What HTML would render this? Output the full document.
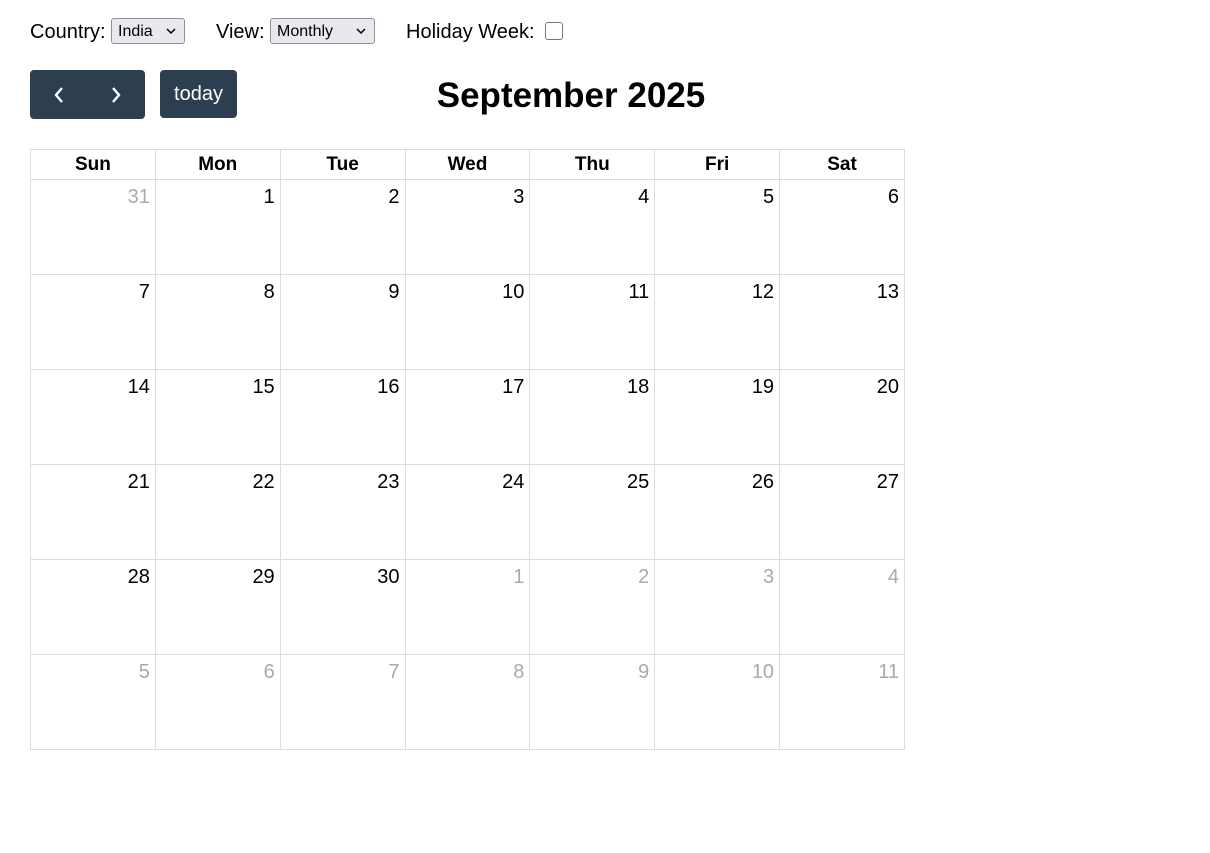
<!DOCTYPE html>
<html><head><style>
body{margin:0;background:#fff;font-family:"Liberation Sans",Arial,sans-serif;color:#000;width:1210px;height:853px;position:relative;overflow:hidden}
.a{position:absolute}
.sel{position:absolute;top:18px;height:26px;border:1px solid #8f8f9d;border-radius:3px;background:#e9e9ed;font-size:16px;box-sizing:border-box;padding:4px 0 0 6px}
.sel svg{position:absolute;right:8px;top:9px}
.btn{position:absolute;background:#2c3e50;border-radius:4px;color:#fff}
table{position:absolute;left:30px;top:149px;border-collapse:collapse;table-layout:fixed;width:875px}
td,th{border:1px solid #ddd;padding:0}
th{height:28px;font-size:19px;font-weight:bold;padding-top:1px}
td{height:88px;vertical-align:top;text-align:right;font-size:20px;padding:6px 5px 0 0}
.o{color:#aaa}
</style></head><body>
<div class="a" style="left:30px;top:21px;font-size:20px">Country:</div>
<div class="sel" style="left:111px;width:74px">India<svg width="10" height="7"><path d="M1 1l4 4 4-4" stroke="#000" stroke-width="1.5" fill="none"/></svg></div>
<div class="a" style="left:216px;top:21px;font-size:20px">View:</div>
<div class="sel" style="left:270px;width:105px">Monthly<svg width="10" height="7"><path d="M1 1l4 4 4-4" stroke="#000" stroke-width="1.5" fill="none"/></svg></div>
<div class="a" style="left:406px;top:21px;font-size:20px">Holiday Week:</div>
<div class="a" style="left:545px;top:22px;width:18px;height:18px;border:1px solid #767676;border-radius:3px;box-sizing:border-box"></div>
<div class="btn" style="left:30px;top:70px;width:115px;height:49px">
<svg class="a" style="left:23px;top:15px" width="12" height="20"><path d="M9 3L3 10l6 7" stroke="#fff" stroke-width="2.4" fill="none"/></svg>
<svg class="a" style="left:80px;top:15px" width="12" height="20"><path d="M3 3l6 7-6 7" stroke="#fff" stroke-width="2.4" fill="none"/></svg>
</div>
<div class="btn" style="left:160px;top:70px;width:77px;height:48px;font-size:20px;line-height:49px;text-align:center">today</div>
<div class="a" style="left:300px;width:542px;top:76px;text-align:center;font-size:35px;font-weight:bold">September 2025</div>
<table>
<tr><th>Sun</th><th>Mon</th><th>Tue</th><th>Wed</th><th>Thu</th><th>Fri</th><th>Sat</th></tr>
<tr><td class="o">31</td><td>1</td><td>2</td><td>3</td><td>4</td><td>5</td><td>6</td></tr>
<tr><td>7</td><td>8</td><td>9</td><td>10</td><td>11</td><td>12</td><td>13</td></tr>
<tr><td>14</td><td>15</td><td>16</td><td>17</td><td>18</td><td>19</td><td>20</td></tr>
<tr><td>21</td><td>22</td><td>23</td><td>24</td><td>25</td><td>26</td><td>27</td></tr>
<tr><td>28</td><td>29</td><td>30</td><td class="o">1</td><td class="o">2</td><td class="o">3</td><td class="o">4</td></tr>
<tr><td class="o">5</td><td class="o">6</td><td class="o">7</td><td class="o">8</td><td class="o">9</td><td class="o">10</td><td class="o">11</td></tr>
</table>
</body></html>
